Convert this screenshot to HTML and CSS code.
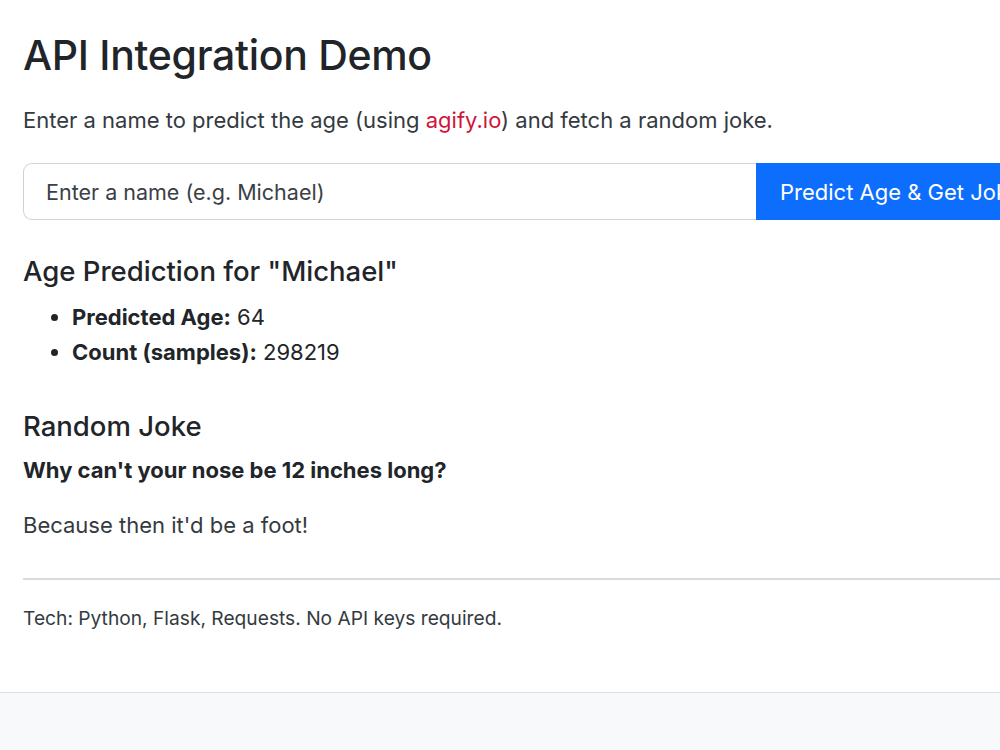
FILE: index.html
```html
<!DOCTYPE html>
<html lang="en">
<head>
<meta charset="utf-8">
<title>API Integration Demo</title>
<link rel="stylesheet" href="styles.css">
</head>
<body>
<main class="card">
  <h1 class="title">API Integration Demo</h1>
  <p class="lead">Enter a name to predict the age (using <a class="link" href="#">agify.io</a>) and fetch a random joke.</p>
  <form class="input-group">
    <input class="name-input" type="text" placeholder="Enter a name (e.g. Michael)">
    <button class="btn" type="button">Predict Age &amp; Get Joke</button>
  </form>
  <h2 class="section-title">Age Prediction for "Michael"</h2>
  <ul class="facts">
    <li><strong>Predicted Age:</strong> 64</li>
    <li><strong>Count (samples):</strong> 298219</li>
  </ul>
  <h2 class="section-title joke-title">Random Joke</h2>
  <p class="setup">Why can't your nose be 12 inches long?</p>
  <p class="punchline">Because then it'd be a foot!</p>
  <hr class="divider">
  <p class="footer">Tech: Python, Flask, Requests. No API keys required.</p>
</main>
</body>
</html>
```
FILE: styles.css
```css
html, body {
  margin: 0;
  padding: 0;
}
body {
  background: #f8f9fb;
  font-family: Inter, "Noto Sans", sans-serif;
  color: #212529;
  overflow: hidden;
}
.card {
  background: #fff;
  height: 693px;
  box-sizing: border-box;
  padding: 31px 0 0 23px;
  border-bottom: 1px solid #dcdde0;
  box-shadow: 0 2px 6px rgba(0, 0, 0, 0.04);
  overflow: hidden;
}
.title {
  margin: 0 0 24px;
  font-size: 41px;
  font-weight: 500;
  line-height: 1.2;
  letter-spacing: -0.3px;
}
.lead {
  margin: 0 0 26px;
  font-size: 22px;
  line-height: 1.5;
  color: #343a40;
}
.link {
  color: #d0153a;
  text-decoration: none;
}
.input-group {
  display: flex;
  width: 1100px;
  height: 57px;
  margin: 0 0 35px;
}
.name-input {
  width: 733px;
  box-sizing: border-box;
  border: 1px solid #cfd3d8;
  border-right: 0;
  border-radius: 9px 0 0 9px;
  padding: 0 0 0 22px;
  font-family: inherit;
  font-size: 21.5px;
  color: #212529;
  outline: none;
}
.name-input::placeholder {
  color: #3b4046;
}
.btn {
  flex: 1;
  border: 0;
  background: #0d6efd;
  color: #fff;
  font-family: inherit;
  font-size: 22px;
  text-align: left;
  padding: 0 0 0 24px;
}
.section-title {
  margin: 0 0 12px;
  font-size: 27.5px;
  font-weight: 500;
  line-height: 1.2;
}
.facts {
  margin: 0 0 40px;
  padding-left: 49px;
  font-size: 22px;
  line-height: 35px;
}
.facts strong {
  font-weight: 700;
}
.joke-title {
  margin-bottom: 11px;
}
.setup {
  margin: 0 0 22px;
  font-size: 22px;
  font-weight: 700;
  line-height: 1.5;
}
.punchline {
  margin: 0 0 36px;
  font-size: 22px;
  line-height: 1.5;
  color: #343a40;
}
.divider {
  margin: 0 0 24px;
  border: 0;
  border-top: 2px solid #d8dadd;
}
.footer {
  margin: 0;
  font-size: 19.2px;
  line-height: 1.5;
  color: #343a40;
}
```
